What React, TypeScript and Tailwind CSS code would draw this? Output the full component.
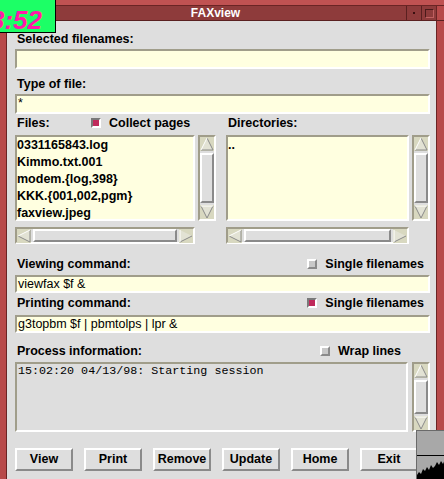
import React from "react";

const files = [
  "0331165843.log",
  "Kimmo.txt.001",
  "modem.{log,398}",
  "KKK.{001,002,pgm}",
  "faxview.jpeg",
];

const buttons = ["View", "Print", "Remove", "Update", "Home", "Exit"];

const sunken =
  "border-2 border-t-[#a09d8a] border-l-[#a09d8a] border-b-white border-r-white";
const raised =
  "border-2 border-t-white border-l-white border-b-[#8a8a8a] border-r-[#8a8a8a]";

export default function App() {
  return (
    <div className="relative h-[479px] w-[444px] overflow-hidden bg-[#dedede] font-['Liberation_Sans',Arial,sans-serif] text-black">
      <div className="flex h-full flex-col">
        <TitleBar />
        <div className="flex min-h-0 flex-1">
          <div className="w-[7px] border-r border-[#6a2424] bg-[#b84a4a]" />
          <main className="flex-1 pt-[10px] pr-[6px] pl-[8px]">
            <Label>Selected filenames:</Label>
            <div className={`mt-[2px] h-[20px] bg-[#ffffe0] ${sunken}`} />

            <Label className="mt-[7px]">Type of file:</Label>
            <div
              className={`mt-[2px] h-[20px] bg-[#ffffe0] pl-[1px] text-[12.5px] leading-[14px] ${sunken}`}
            >
              *
            </div>

            <div className="mt-[1px] grid grid-cols-[201px_1fr] gap-[10px]">
              <div>
                <div className="flex h-[16px] items-center">
                  <span className="w-[76px] pl-[2px] text-[12.5px] font-bold">Files:</span>
                  <Check checked label="Collect pages" />
                </div>
                <ListWithScroll items={files} />
              </div>
              <div>
                <div className="flex h-[16px] items-center">
                  <span className="pl-[2px] text-[12.5px] font-bold">Directories:</span>
                </div>
                <ListWithScroll items={[".."]} />
              </div>
            </div>

            <div className="mt-[12px] flex h-[16px] items-center justify-between pr-[6px]">
              <span className="pl-[2px] text-[12.5px] font-bold">Viewing command:</span>
              <Check label="Single filenames" />
            </div>
            <div
              className={`mt-[3px] h-[18px] bg-[#ffffe0] pl-[1px] text-[12.5px] leading-[14px] ${sunken}`}
            >
              viewfax $f &amp;
            </div>

            <div className="mt-[2px] flex h-[16px] items-center justify-between pr-[6px]">
              <span className="pl-[2px] text-[12.5px] font-bold">Printing command:</span>
              <Check checked label="Single filenames" />
            </div>
            <div
              className={`mt-[4px] h-[18px] bg-[#ffffe0] pl-[1px] text-[12.5px] leading-[14px] ${sunken}`}
            >
              g3topbm $f | pbmtolps | lpr &amp;
            </div>

            <div className="mt-[10px] flex h-[16px] items-center justify-between pr-[29px]">
              <span className="pl-[2px] text-[12.5px] font-bold">Process information:</span>
              <Check label="Wrap lines" />
            </div>
            <div className="mt-[3px] flex h-[70px] gap-[4px]">
              <div
                className={`flex-1 bg-[#dedede] pl-[1px] font-['Liberation_Mono',monospace] text-[11.7px] leading-[14px] ${sunken}`}
              >
                15:02:20 04/13/98: Starting session
              </div>
              <VScroll />
            </div>

            <div className="mt-[16px] grid w-[403px] grid-cols-6 gap-[11px]">
              {buttons.map((b) => (
                <button
                  key={b}
                  className={`h-[23px] bg-[#dedede] text-[12.5px] font-bold ${raised}`}
                >
                  {b}
                </button>
              ))}
            </div>
          </main>
          <div className="w-[8px] border-l border-[#6a2424] bg-[#b84a4a]" />
        </div>
      </div>

      <Clock />
      <LoadGraph />
    </div>
  );
}

const Label = ({
  children,
  className = "",
}: {
  children: React.ReactNode;
  className?: string;
}) => (
  <div className={`h-[16px] pl-[2px] text-[12.5px] leading-[16px] font-bold ${className}`}>
    {children}
  </div>
);

const TitleBar = () => (
  <div className="shrink-0">
    <div className="h-[6px] border-b border-[#6a2424] bg-[#c05252]" />
    <div className="flex h-[15px] border-b border-[#5a2020]">
      <div className="w-[7px] bg-[#b84a4a]" />
      <div className="flex flex-1 items-center justify-center bg-[#8e3b3b] pl-[18px] text-[12px] font-bold text-white">
        FAXview
      </div>
      <div className="flex w-[15px] items-center justify-center border-l border-[#5a2020] bg-[#8e3b3b]">
        <div className="h-[2px] w-[2px] bg-[#3a1010]" />
      </div>
      <div className="flex w-[15px] items-center justify-center border-l border-[#5a2020] bg-[#8e3b3b]">
        <div className="h-[9px] w-[9px] border border-[#4a1a1a] border-b-[#c06060] border-r-[#c06060]" />
      </div>
      <div className="w-[8px] border-l border-[#6a2424] bg-[#b84a4a]" />
    </div>
  </div>
);

const Check = ({ checked = false, label }: { checked?: boolean; label: string }) => (
  <div className="flex items-center gap-[8px]">
    <div
      className={
        checked
          ? "h-[10px] w-[10px] border-2 border-t-[#7a7a7a] border-l-[#7a7a7a] border-b-white border-r-white bg-[#c02a5c]"
          : "h-[10px] w-[10px] border-2 border-t-white border-l-white border-b-[#8a8a8a] border-r-[#8a8a8a] bg-[#c8c8c8]"
      }
    />
    <span className="text-[12.5px] font-bold">{label}</span>
  </div>
);

const ListWithScroll = ({ items }: { items: string[] }) => (
  <>
    <div className="mt-[4px] flex h-[86px] gap-[3px]">
      <div className={`flex-1 bg-[#ffffe0] ${sunken}`}>
        {items.map((f) => (
          <div key={f} className="text-[12.5px] leading-[17px] font-bold">
            {f}
          </div>
        ))}
      </div>
      <VScroll />
    </div>
    <div className="mt-[6px] pr-[21px]">
      <HScroll />
    </div>
  </>
);

const Arrow = ({ dir }: { dir: "up" | "down" | "left" | "right" }) => {
  const pts = {
    up: "7,1 13,13 1,13",
    down: "1,1 13,1 7,13",
    left: "1,7 13,1 13,13",
    right: "1,1 13,7 1,13",
  }[dir];
  const light = {
    up: "M7 1 L1 13",
    down: "M1 1 L13 1",
    left: "M1 7 L13 1",
    right: "M1 1 L1 13",
  }[dir];
  const dark = {
    up: "M7 1 L13 13 L1 13",
    down: "M13 1 L7 13 L1 1",
    left: "M13 1 L13 13 L1 7",
    right: "M1 13 L13 7",
  }[dir];
  return (
    <svg width="14" height="14" viewBox="0 0 14 14" className="block shrink-0 bg-[#d8d8c0]">
      <polygon points={pts} fill="#e2e2d4" />
      <path d={dark} stroke="#8a8a8a" strokeWidth="1" fill="none" />
      <path d={light} stroke="#ffffff" strokeWidth="1" fill="none" />
    </svg>
  );
};

const VScroll = () => (
  <div className={`flex h-full w-[18px] flex-col bg-[#dedede] ${sunken}`}>
    <Arrow dir="up" />
    <div className="flex-1 py-[2px]">
      <div className={`h-full bg-[#dedede] ${raised}`} />
    </div>
    <Arrow dir="down" />
  </div>
);

const HScroll = () => (
  <div className={`flex h-[17px] items-center bg-[#dedede] ${sunken}`}>
    <Arrow dir="left" />
    <div className="h-full flex-1 px-[2px]">
      <div className={`h-full bg-[#dedede] ${raised}`} />
    </div>
    <Arrow dir="right" />
  </div>
);

const Clock = () => (
  <div className="absolute top-0 left-0 h-[33px] w-[56px] overflow-hidden border-r border-b border-black bg-[#1cff66]">
    <span className="-ml-[10px] block text-[26px] leading-[40px] font-bold whitespace-nowrap text-[#ff1aa8] italic">
      3:52
    </span>
  </div>
);

const LoadGraph = () => (
  <div className="absolute top-[430px] left-[416px] h-[49px] w-[28px] border-t border-l border-[#6a6a6a] bg-[#a8a8a8]">
    <svg width="28" height="49" viewBox="0 0 28 49" className="block">
      <line x1="0" y1="24.5" x2="28" y2="24.5" stroke="#000" strokeWidth="1" />
      <polygon
        points="0,49 0,44 2,41 4,43 6,38 8,40 10,36 12,39 14,34 16,37 18,35 20,31 22,34 24,30 26,33 28,28 28,49"
        fill="#000"
      />
    </svg>
  </div>
);
